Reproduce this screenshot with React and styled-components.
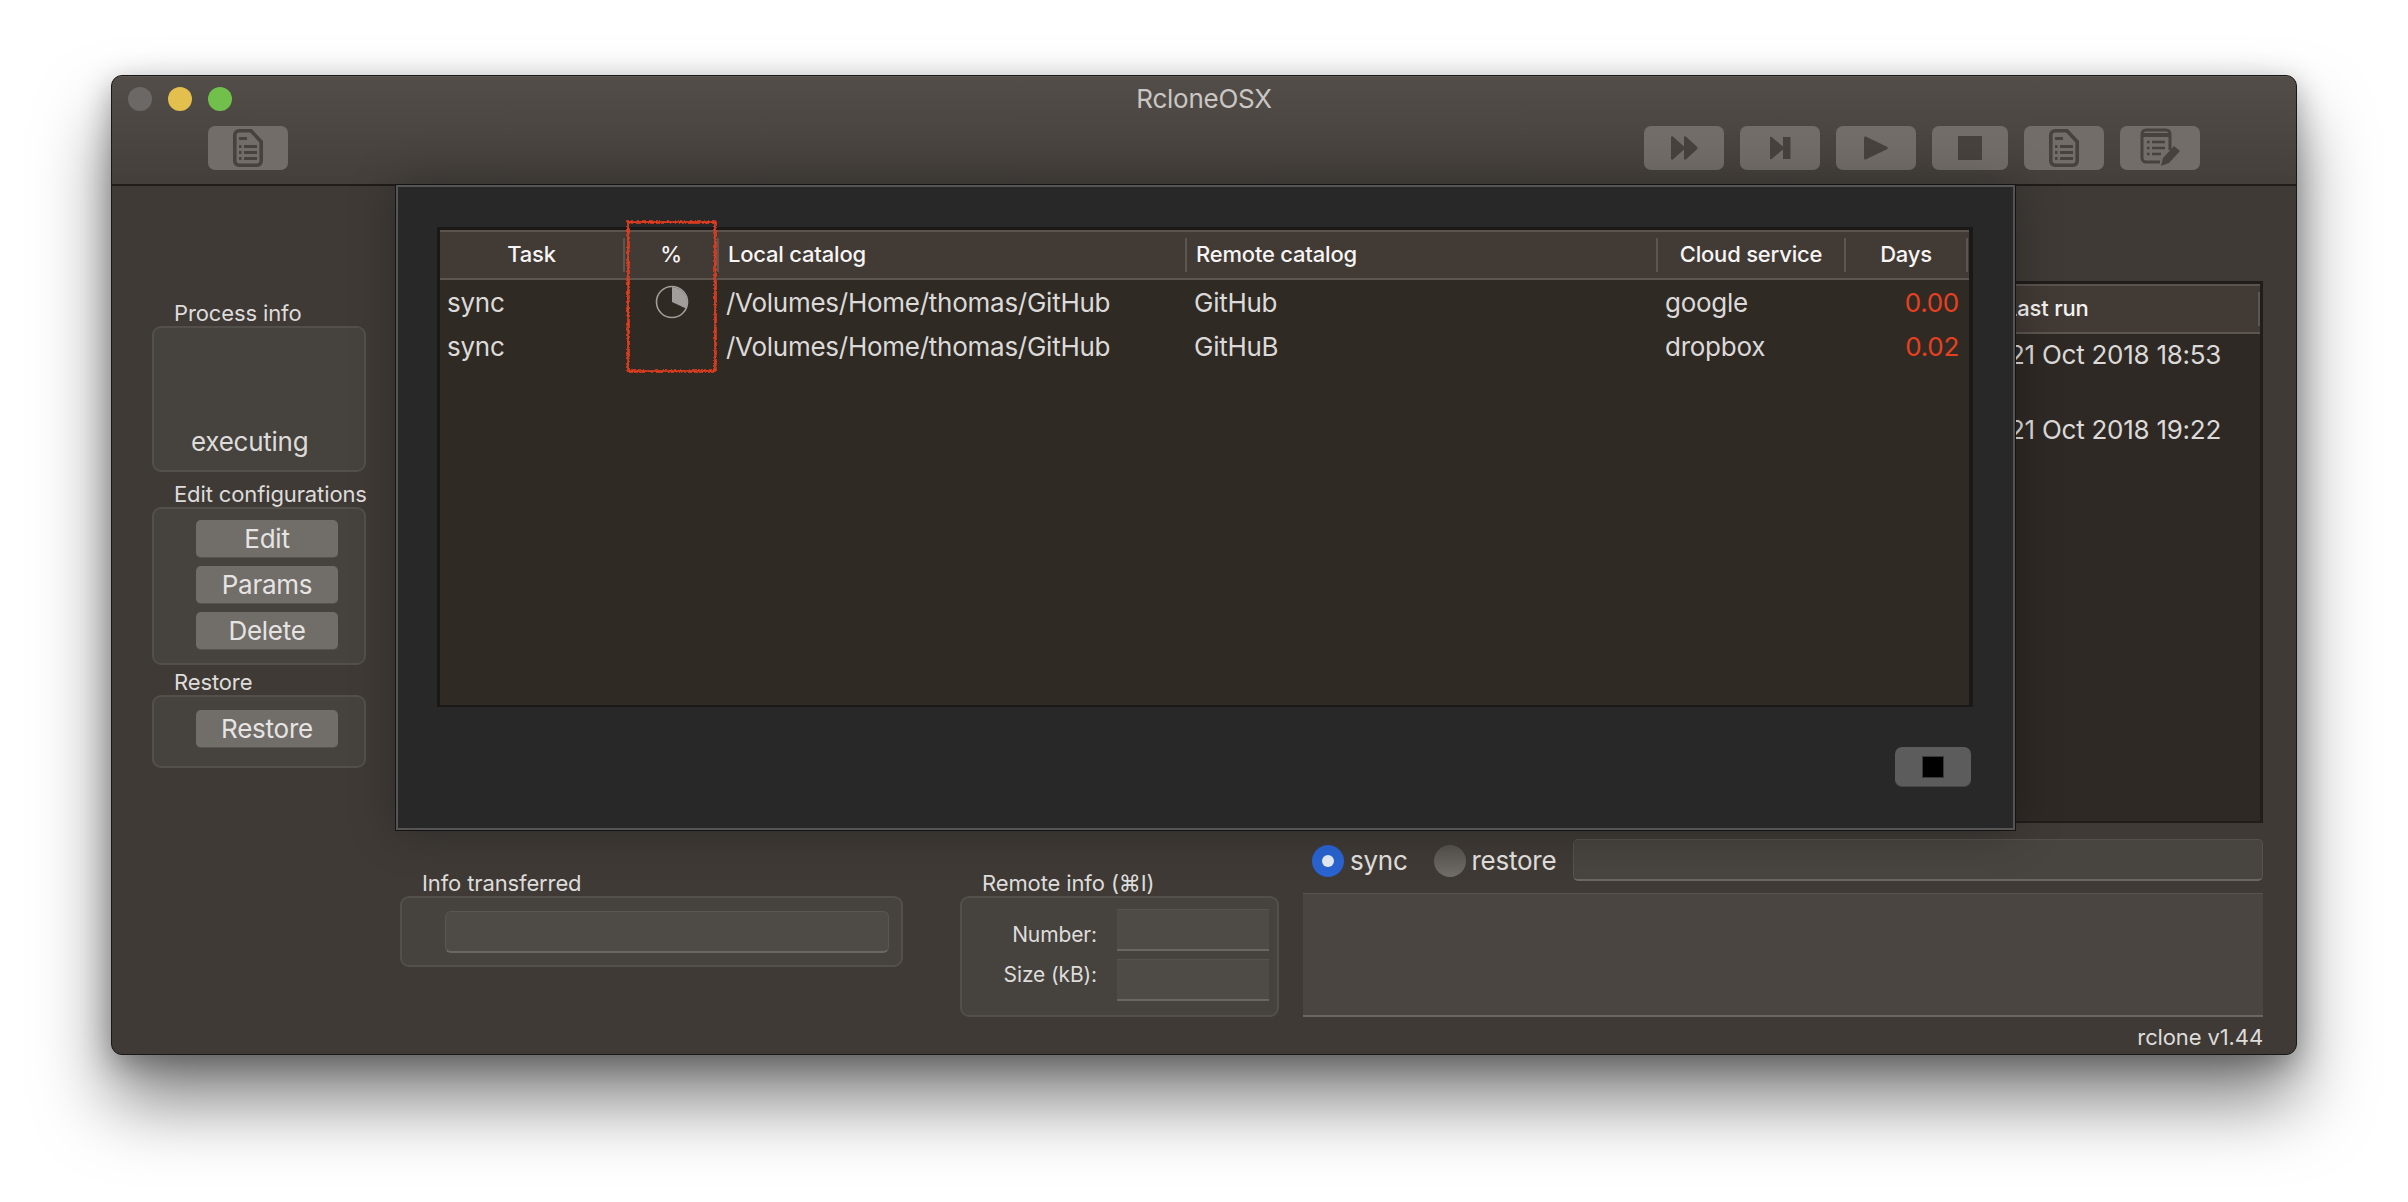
import styled, { createGlobalStyle } from "styled-components";

const GlobalStyle = createGlobalStyle`
  html, body {
    margin: 0;
    background: #fff;
  }
  * {
    box-sizing: border-box;
  }
`;

const font = `Inter, "Liberation Sans", sans-serif`;

const Page = styled.div`
  width: 2408px;
  height: 1202px;
  padding: 75px 0 0 111px;
  overflow: hidden;
  font-family: ${font};
`;

const Window = styled.div`
  width: 2186px;
  height: 980px;
  display: flex;
  flex-direction: column;
  border: 1px solid #1a1816;
  border-radius: 11px;
  background: #3f3a36;
  box-shadow: 0 46px 72px rgba(0, 0, 0, 0.5), 0 8px 30px rgba(0, 0, 0, 0.3);
  overflow: hidden;
`;

const TitleBar = styled.header`
  height: 110px;
  flex: none;
  background: linear-gradient(#534d49, #443f3b);
  border-bottom: 2px solid #1f1c1a;
  border-top: 1px solid #5f5955;
`;

const TitleRow = styled.div`
  height: 43px;
  display: grid;
  grid-template-columns: 1fr auto 1fr;
  align-items: center;
`;

const Lights = styled.div`
  display: flex;
  gap: 16px;
  padding-left: 16px;
`;

const Light = styled.span`
  width: 24px;
  height: 24px;
  border-radius: 50%;
  background: ${(p) => p.$color};
`;

const Title = styled.div`
  color: #c9c6c3;
  font-size: 26px;
  letter-spacing: -0.26px;
`;

const Toolbar = styled.div`
  display: flex;
  justify-content: space-between;
  margin-top: 6px;
  padding: 0 96px;
`;

const ToolGroup = styled.div`
  display: flex;
  gap: 16px;
`;

const ToolButton = styled.div`
  width: ${(p) => p.$width || 80}px;
  height: 44px;
  display: flex;
  align-items: center;
  justify-content: center;
  border-radius: 7px;
  background: #726d69;
  color: #47423e;
`;

const Body = styled.div`
  flex: 1;
  display: grid;
  grid-template-columns: 284px 1fr;
  min-height: 0;
`;

const Sidebar = styled.aside`
  padding: 114px 0 0 40px;
`;

const GroupLabel = styled.div`
  height: 26px;
  padding-left: 22px;
  color: #dedcda;
  font-size: 22px;
  line-height: 26px;
  white-space: nowrap;
  letter-spacing: -0.12px;
`;

const SideGroup = styled.div`
  width: 214px;
  height: ${(p) => p.$height}px;
  margin-bottom: ${(p) => p.$gap || 0}px;
  display: flex;
  flex-direction: column;
  gap: 8px;
  padding: ${(p) => p.$top || 11}px 0 0 42px;
  background: #46423e;
  border: 2px solid #534f4b;
  border-radius: 9px;
`;

const Status = styled.div`
  margin: auto 0 13px -5px;
  color: #dedcda;
  font-size: 26px;
  line-height: 30px;
  letter-spacing: -0.26px;
`;

const PushButton = styled.div`
  width: 142px;
  height: 38px;
  flex: none;
  display: flex;
  align-items: center;
  justify-content: center;
  border-radius: 5px;
  background: #716d69;
  border-bottom: 1px solid #57534f;
  color: #e6e4e2;
  font-size: 26px;
  letter-spacing: -0.26px;
`;

const Main = styled.main`
  position: relative;
  padding: 95px 33px 0 4px;
`;

const BackTable = styled.div`
  height: 542px;
  display: flex;
  flex-direction: column;
  align-items: flex-end;
  background: #2f2925;
  border: 3px solid #201d1b;
  border-bottom-width: 2px;
`;

const BackHead = styled.div`
  width: 100%;
  height: 50px;
  flex: none;
  display: flex;
  justify-content: flex-end;
  align-items: center;
  background: #423a35;
  border-top: 2px solid #5a534e;
  border-bottom: 2px solid #5c5650;
`;

const BackHeadCell = styled.div`
  width: 256px;
  height: 34px;
  padding-left: 1px;
  color: #f4f3f2;
  font-size: 22px;
  font-weight: 500;
  line-height: 32px;
  border-right: 2px solid #5c5650;
  letter-spacing: -0.2px;
`;

const BackRow = styled.div`
  width: 256px;
  height: 75px;
  padding: 6px 0 0 5px;
  color: #dcdad8;
  font-size: 26px;
  line-height: 30px;
  letter-spacing: -0.26px;
`;

const BottomRow = styled.div`
  display: flex;
  align-items: flex-start;
  margin-top: 16px;
`;

const InfoColumn = styled.section`
  width: 503px;
  margin-top: 31px;
  margin-right: 57px;
`;

const RemoteColumn = styled.section`
  width: 319px;
  margin-top: 31px;
  margin-right: 24px;
`;

const RightColumn = styled.section`
  flex: 1;
`;

const FlatGroup = styled.div`
  height: ${(p) => p.$height}px;
  background: #46423e;
  border: 2px solid #534f4b;
  border-radius: 9px;
`;

const InfoGroup = styled(FlatGroup)`
  padding: 13px 12px 0 43px;
`;

const ProgressField = styled.div`
  height: 42px;
  background: #4e4b47;
  border: 1px solid #5a5652;
  border-bottom: 2px solid #6a6662;
  border-radius: 6px;
`;

const RemoteGroup = styled(FlatGroup)`
  display: grid;
  grid-template-columns: 135px 152px;
  grid-auto-rows: 42px;
  column-gap: 20px;
  row-gap: 8px;
  padding-top: 11px;
`;

const FieldLabel = styled.div`
  align-self: center;
  transform: translateY(${(p) => p.$nudge}px);
  text-align: right;
  color: #dedcda;
  font-size: 21px;
  letter-spacing: -0.12px;
`;

const ValueField = styled.div`
  background: #4e4b47;
  border-top: 1px solid #57534f;
  border-bottom: 2px solid #6a6662;
`;

const ModeRow = styled.div`
  height: 42px;
  display: flex;
  align-items: center;
  margin-bottom: 12px;
  padding-left: 9px;
`;

const Radio = styled.span`
  width: 32px;
  height: 32px;
  display: flex;
  align-items: center;
  justify-content: center;
  margin-top: 1px;
  border-radius: 50%;
  background: ${(p) => (p.$on ? "#2a64d2" : "linear-gradient(#55514d, #716d69)")};
  &::after {
    content: "";
    display: ${(p) => (p.$on ? "block" : "none")};
    width: 12px;
    height: 12px;
    border-radius: 50%;
    background: #e6ecf6;
  }
`;

const RadioText = styled.span`
  margin: 0 ${(p) => p.$after}px 0 6px;
  color: #e2e0de;
  font-size: 26px;
  letter-spacing: -0.26px;
`;

const PathField = styled.div`
  flex: 1;
  height: 42px;
  background: #48443f;
  border: 1px solid #55514d;
  border-bottom: 2px solid #6a6662;
  border-radius: 5px;
`;

const LogArea = styled.div`
  height: 124px;
  background: #4a4541;
  border-top: 1px solid #57534f;
  border-bottom: 2px solid #6a6662;
`;

const Version = styled.div`
  height: 40px;
  color: #dedcda;
  font-size: 22px;
  line-height: 40px;
  text-align: right;
  letter-spacing: -0.12px;
`;

const Sheet = styled.div`
  position: absolute;
  top: -1px;
  left: 0;
  width: 1619px;
  height: 645px;
  display: flex;
  flex-direction: column;
  padding: 40px 40px 0 39px;
  background: #282828;
  border: 2px solid #555;
  outline: 1px solid #141414;
  box-shadow: 0 0 44px rgba(0, 0, 0, 0.28);
`;

const ModalTable = styled.div`
  position: relative;
  height: 480px;
  flex: none;
  display: flex;
  flex-direction: column;
  background: #302a25;
  border: 3px solid #1b1918;
  border-right-width: 4px;
  border-bottom-width: 2px;
`;

const columns = "185px 94px 468px 471px 188px 122px";

const HeadRow = styled.div`
  height: 50px;
  flex: none;
  display: grid;
  grid-template-columns: ${columns};
  align-items: center;
  background: #423a35;
  border-top: 2px solid #5a534e;
  border-bottom: 2px solid #5c5650;
`;

const HeadCell = styled.div`
  height: 34px;
  padding: ${(p) => (p.$left ? "0 0 0 9px" : "0")};
  border-right: 2px solid #5c5650;
  color: #f6f5f4;
  font-size: 22px;
  font-weight: 500;
  line-height: 32px;
  text-align: ${(p) => (p.$left ? "left" : "center")};
  letter-spacing: -0.2px;
`;

const Row = styled.div`
  height: 44px;
  display: grid;
  grid-template-columns: ${columns};
  align-items: center;
  color: #dcdad8;
  font-size: 26px;
  letter-spacing: -0.26px;
`;

const Cell = styled.div`
  display: flex;
  justify-content: ${(p) => (p.$center ? "center" : "flex-start")};
  padding-left: ${(p) => (p.$center ? 0 : 7)}px;
  white-space: nowrap;
`;

const DaysCell = styled.div`
  padding-right: 9px;
  color: #e8401f;
  text-align: right;
`;

const Annotation = styled.svg`
  position: absolute;
  top: -10px;
  left: 186px;
  overflow: visible;
  pointer-events: none;
`;

const SheetFooter = styled.div`
  display: flex;
  justify-content: flex-end;
  margin: 40px 2px 0 0;
`;

const StopButton = styled.div`
  width: 76px;
  height: 40px;
  display: flex;
  align-items: center;
  justify-content: center;
  border-radius: 7px;
  background: #5c5c5c;
  border-bottom: 1px solid #474747;
`;

const StopMark = styled.span`
  width: 22px;
  height: 22px;
  background: #000;
  border: 1px solid #3a3a3a;
`;

function DocIcon() {
  return (
    <svg width="30" height="38" viewBox="0 0 30 38" fill="none" stroke="currentColor">
      <path
        d="M6 1.800h12l10.200 11V32A4.200 4.200 0 0 1 24 36.200H6A4.200 4.200 0 0 1 1.800 32V6A4.200 4.200 0 0 1 6 1.800z"
        strokeWidth="3.600"
      />
      <path d="M6 9.500h8M6 17.500h2.500M11 17.500h13M6 23.500h2.500M11 23.500h13M6 29.500h2.500M11 29.500h13" strokeWidth="3" />
    </svg>
  );
}

function EditDocIcon() {
  return (
    <svg width="40" height="40" viewBox="0 0 40 40" fill="none" stroke="currentColor">
      <path d="M30 22V6a4 4 0 0 0-4-4H6a4 4 0 0 0-4 4v24a4 4 0 0 0 4 4h14" strokeWidth="3" />
      <path d="M2 7h28" strokeWidth="4" />
      <path d="M7 14h2.500M12 14h13M7 20h2.500M12 20h13M7 26h2.500M12 26h9" strokeWidth="2.500" />
      <path d="M21 38l2-8 11-12 6 5-11 12z" fill="currentColor" stroke="none" />
    </svg>
  );
}

function FastForwardIcon() {
  return (
    <svg width="28" height="24" viewBox="0 0 28 24" fill="currentColor">
      <path d="M1 1.500c0-1 1-1.500 1.800-.9L14 10.500V1.500c0-1 1-1.500 1.800-.9L27 10.800c.8.700.8 1.700 0 2.400L15.800 23.400c-.8.600-1.800.1-1.800-.9V13.500L2.800 23.400c-.8.600-1.800.1-1.800-.9z" />
    </svg>
  );
}

function NextIcon() {
  return (
    <svg width="21" height="24" viewBox="0 0 21 24" fill="currentColor">
      <path d="M0 2c0-1 .8-1.500 1.600-.9L13 10.500V1h7.500v22H13v-9.500L1.600 22.900C.8 23.500 0 23 0 22z" />
    </svg>
  );
}

function PlayIcon() {
  return (
    <svg width="24" height="24" viewBox="0 0 24 24" fill="currentColor">
      <path d="M0 2c0-1.300 1.200-2 2.200-1.300L23 10.700c1 .7 1 1.900 0 2.600L2.200 23.300C1.200 24 0 23.300 0 22z" />
    </svg>
  );
}

function StopIcon() {
  return (
    <svg width="24" height="24" viewBox="0 0 24 24" fill="currentColor">
      <rect width="24" height="24" />
    </svg>
  );
}

function PieIcon() {
  return (
    <svg width="34" height="34" viewBox="0 0 34 34">
      <circle cx="17" cy="17" r="15.500" fill="none" stroke="#a09d9a" strokeWidth="1.600" />
      <path d="M17 2v15l14 6.600A15.500 15.500 0 0 0 17 2z" fill="#a09d9a" />
    </svg>
  );
}

const rows = [
  { path: "/Volumes/Home/thomas/GitHub", remote: "GitHub", cloud: "google", days: "0.00", busy: true },
  { path: "/Volumes/Home/thomas/GitHub", remote: "GitHuB", cloud: "dropbox", days: "0.02" },
];

export default function App() {
  return (
    <Page>
      <GlobalStyle />
      <Window>
        <TitleBar>
          <TitleRow>
            <Lights>
              <Light $color="#6c6865" />
              <Light $color="#e3bf4d" />
              <Light $color="#72c04c" />
            </Lights>
            <Title>RcloneOSX</Title>
          </TitleRow>
          <Toolbar>
            <ToolButton>
              <DocIcon />
            </ToolButton>
            <ToolGroup>
              <ToolButton>
                <FastForwardIcon />
              </ToolButton>
              <ToolButton>
                <NextIcon />
              </ToolButton>
              <ToolButton>
                <PlayIcon />
              </ToolButton>
              <ToolButton $width={76}>
                <StopIcon />
              </ToolButton>
              <ToolButton>
                <DocIcon />
              </ToolButton>
              <ToolButton>
                <EditDocIcon />
              </ToolButton>
            </ToolGroup>
          </Toolbar>
        </TitleBar>

        <Body>
          <Sidebar>
            <GroupLabel>Process info</GroupLabel>
            <SideGroup $height={146} $gap={9}>
              <Status>executing</Status>
            </SideGroup>
            <GroupLabel>Edit configurations</GroupLabel>
            <SideGroup $height={158} $gap={4}>
              <PushButton>Edit</PushButton>
              <PushButton>Params</PushButton>
              <PushButton>Delete</PushButton>
            </SideGroup>
            <GroupLabel>Restore</GroupLabel>
            <SideGroup $height={73} $top={13}>
              <PushButton>Restore</PushButton>
            </SideGroup>
          </Sidebar>

          <Main>
            <BackTable>
              <BackHead>
                <BackHeadCell>Last run</BackHeadCell>
              </BackHead>
              <BackRow>21 Oct 2018 18:53</BackRow>
              <BackRow>21 Oct 2018 19:22</BackRow>
            </BackTable>

            <BottomRow>
              <InfoColumn>
                <GroupLabel>Info transferred</GroupLabel>
                <InfoGroup $height={71}>
                  <ProgressField />
                </InfoGroup>
              </InfoColumn>
              <RemoteColumn>
                <GroupLabel>Remote info (⌘I)</GroupLabel>
                <RemoteGroup $height={121}>
                  <FieldLabel $nudge={4}>Number:</FieldLabel>
                  <ValueField />
                  <FieldLabel $nudge={-6}>Size (kB):</FieldLabel>
                  <ValueField />
                </RemoteGroup>
              </RemoteColumn>
              <RightColumn>
                <ModeRow>
                  <Radio $on />
                  <RadioText $after={26}>sync</RadioText>
                  <Radio />
                  <RadioText $after={17}>restore</RadioText>
                  <PathField />
                </ModeRow>
                <LogArea />
                <Version>rclone v1.44</Version>
              </RightColumn>
            </BottomRow>

            <Sheet>
              <ModalTable>
                <HeadRow>
                  <HeadCell>Task</HeadCell>
                  <HeadCell>%</HeadCell>
                  <HeadCell $left>Local catalog</HeadCell>
                  <HeadCell $left>Remote catalog</HeadCell>
                  <HeadCell>Cloud service</HeadCell>
                  <HeadCell>Days</HeadCell>
                </HeadRow>
                {rows.map((row) => (
                  <Row key={row.cloud}>
                    <Cell>sync</Cell>
                    <Cell $center>{row.busy && <PieIcon />}</Cell>
                    <Cell>{row.path}</Cell>
                    <Cell>{row.remote}</Cell>
                    <Cell>{row.cloud}</Cell>
                    <DaysCell>{row.days}</DaysCell>
                  </Row>
                ))}
                <Annotation width="90" height="152" viewBox="0 0 90 152" fill="none">
                  <filter id="rough">
                    <feTurbulence baseFrequency="0.35" numOctaves="2" seed="4" />
                    <feDisplacementMap in="SourceGraphic" scale="2.500" />
                  </filter>
                  <rect x="1.500" y="1.500" width="87" height="149" stroke="#e03c1e" strokeWidth="2.600" filter="url(#rough)" />
                </Annotation>
              </ModalTable>
              <SheetFooter>
                <StopButton>
                  <StopMark />
                </StopButton>
              </SheetFooter>
            </Sheet>
          </Main>
        </Body>
      </Window>
    </Page>
  );
}
